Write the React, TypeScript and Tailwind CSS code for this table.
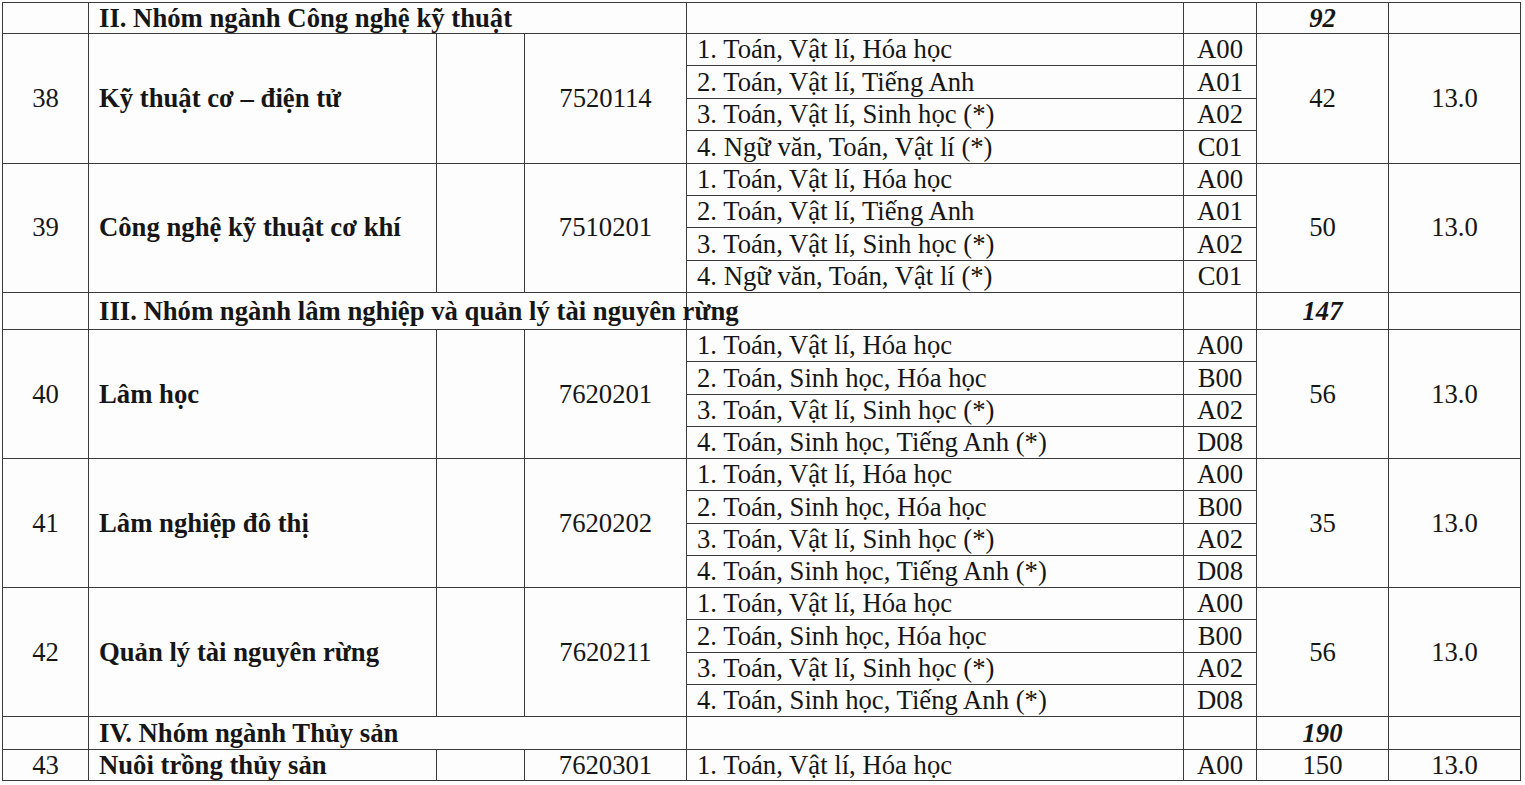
import React from "react";

// Bảng chỉ tiêu tuyển sinh theo nhóm ngành: STT, tên ngành, mã ngành, tổ hợp môn, mã tổ hợp, chỉ tiêu, điểm sàn.
type Subject = { label: string; code: string };
type Major = { no: number; name: string; code: string; subjects: Subject[]; quota: number; score: string };
type Group = { title: string; total: number; h: string; majors: Major[] };

const KT: Subject[] = [
  { label: "1. Toán, Vật lí, Hóa học", code: "A00" },
  { label: "2. Toán, Vật lí, Tiếng Anh", code: "A01" },
  { label: "3. Toán, Vật lí, Sinh học (*)", code: "A02" },
  { label: "4. Ngữ văn, Toán, Vật lí (*)", code: "C01" },
];

const LN: Subject[] = [
  { label: "1. Toán, Vật lí, Hóa học", code: "A00" },
  { label: "2. Toán, Sinh học, Hóa học", code: "B00" },
  { label: "3. Toán, Vật lí, Sinh học (*)", code: "A02" },
  { label: "4. Toán, Sinh học, Tiếng Anh (*)", code: "D08" },
];

const GROUPS: Group[] = [
  {
    title: "II. Nhóm ngành Công nghệ kỹ thuật",
    total: 92,
    h: "h-[31px]",
    majors: [
      { no: 38, name: "Kỹ thuật cơ – điện tử", code: "7520114", subjects: KT, quota: 42, score: "13.0" },
      { no: 39, name: "Công nghệ kỹ thuật cơ khí", code: "7510201", subjects: KT, quota: 50, score: "13.0" },
    ],
  },
  {
    title: "III. Nhóm ngành lâm nghiệp và quản lý tài nguyên rừng",
    total: 147,
    h: "h-[37px]",
    majors: [
      { no: 40, name: "Lâm học", code: "7620201", subjects: LN, quota: 56, score: "13.0" },
      { no: 41, name: "Lâm nghiệp đô thị", code: "7620202", subjects: LN, quota: 35, score: "13.0" },
      { no: 42, name: "Quản lý tài nguyên rừng", code: "7620211", subjects: LN, quota: 56, score: "13.0" },
    ],
  },
  {
    title: "IV. Nhóm ngành Thủy sản",
    total: 190,
    h: "h-[33px]",
    majors: [
      {
        no: 43,
        name: "Nuôi trồng thủy sản",
        code: "7620301",
        subjects: [{ label: "1. Toán, Vật lí, Hóa học", code: "A00" }],
        quota: 150,
        score: "13.0",
      },
    ],
  },
];

const td = "border border-[#3a3a3a] p-0 align-middle";

export default function App() {
  return (
    <div className="min-h-[785px] w-[1525px] bg-[#fdfdfd] pl-[2px] pt-[2px]">
      <table className="w-[1518px] table-fixed border-collapse font-['Liberation_Serif','Times_New_Roman',serif] text-[26.7px] leading-none text-[#161616]">
        <colgroup>
          <col className="w-[86px]" />
          <col className="w-[348px]" />
          <col className="w-[88px]" />
          <col className="w-[162px]" />
          <col className="w-[497px]" />
          <col className="w-[73px]" />
          <col className="w-[132px]" />
          <col className="w-[132px]" />
        </colgroup>
        <tbody>
          {GROUPS.map((g) => (
            <React.Fragment key={g.title}>
              <tr className={g.h}>
                <td className={td} />
                <td colSpan={3} className={`${td} whitespace-nowrap pl-[10px] font-bold`}>
                  {g.title}
                </td>
                <td className={td} />
                <td className={td} />
                <td className={`${td} text-center font-bold italic`}>{g.total}</td>
                <td className={td} />
              </tr>
              {g.majors.map((m) =>
                m.subjects.map((s, i) => (
                  <tr
                    key={`${m.no}-${i}`}
                    className={g.majors.length > 2 ? "h-[32.25px]" : m.subjects.length > 1 ? "h-[32.4px]" : "h-[31px]"}
                  >
                    {i === 0 && (
                      <>
                        <td rowSpan={m.subjects.length} className={`${td} text-center`}>
                          {m.no}
                        </td>
                        <td rowSpan={m.subjects.length} className={`${td} whitespace-nowrap pl-[10px] font-bold`}>
                          {m.name}
                        </td>
                        <td rowSpan={m.subjects.length} className={td} />
                        <td rowSpan={m.subjects.length} className={`${td} text-center`}>
                          {m.code}
                        </td>
                      </>
                    )}
                    <td className={`${td} whitespace-nowrap pl-[10px]`}>{s.label}</td>
                    <td className={`${td} text-center`}>{s.code}</td>
                    {i === 0 && (
                      <>
                        <td rowSpan={m.subjects.length} className={`${td} text-center`}>
                          {m.quota}
                        </td>
                        <td rowSpan={m.subjects.length} className={`${td} text-center`}>
                          {m.score}
                        </td>
                      </>
                    )}
                  </tr>
                ))
              )}
            </React.Fragment>
          ))}
        </tbody>
      </table>
    </div>
  );
}
